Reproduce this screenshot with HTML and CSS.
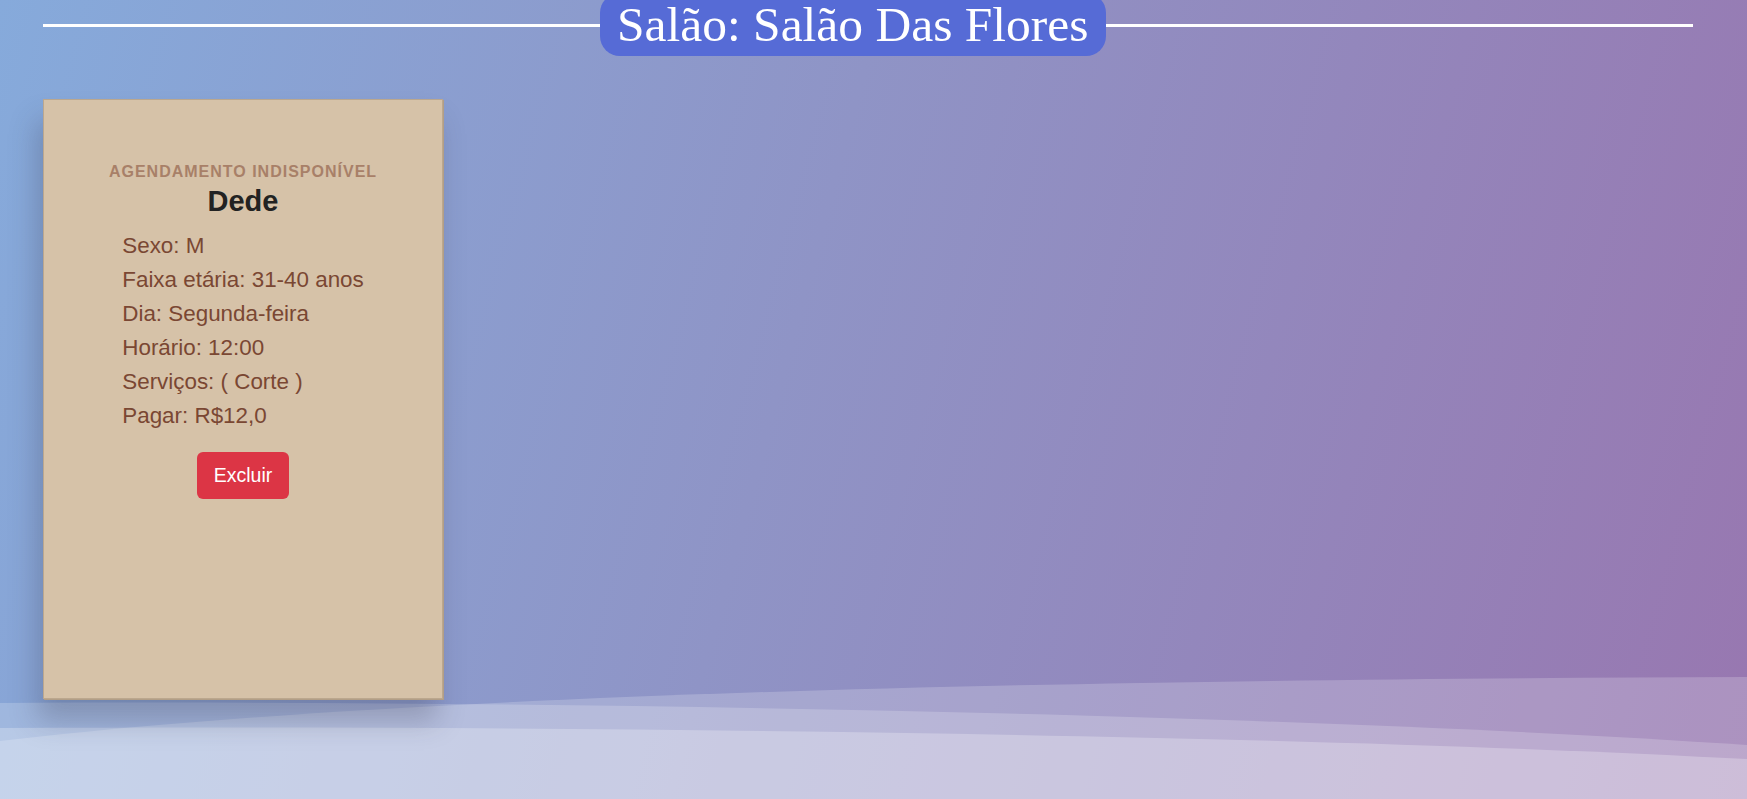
FILE: index.html
```html
<!DOCTYPE html>
<html lang="pt-BR">
<head>
<meta charset="utf-8">
<title>Salão Das Flores</title>
<link rel="stylesheet" href="styles.css">
</head>
<body>
<div class="page">
  <svg class="waves" viewBox="0 0 1747 799" preserveAspectRatio="none" aria-hidden="true">
    <path d="M0,741 C350,700 900,680 1747,677 L1747,799 L0,799 Z" fill="#ffffff" fill-opacity="0.2"/>
    <path d="M0,703 C600,700 1300,715 1747,745 L1747,799 L0,799 Z" fill="#ffffff" fill-opacity="0.2"/>
    <path d="M0,728 C600,725 1300,735 1747,759 L1747,799 L0,799 Z" fill="#ffffff" fill-opacity="0.25"/>
  </svg>
  <header class="title-bar">
    <span class="rule rule-left"></span>
    <h1 class="title">Salão: Salão Das Flores</h1>
    <span class="rule rule-right"></span>
  </header>
  <main class="cards">
    <article class="card">
      <p class="status">AGENDAMENTO INDISPONÍVEL</p>
      <h2 class="name">Dede</h2>
      <div class="details">
        <p>Sexo: M</p>
        <p>Faixa etária: 31-40 anos</p>
        <p>Dia: Segunda-feira</p>
        <p>Horário: 12:00</p>
        <p>Serviços: ( Corte )</p>
        <p>Pagar: R$12,0</p>
      </div>
      <button class="btn-delete" type="button">Excluir</button>
    </article>
  </main>
</div>
</body>
</html>
```

FILE: styles.css
```css
* { box-sizing: border-box; }

html, body {
  margin: 0;
  padding: 0;
}

body {
  font-family: "Liberation Sans", Arial, sans-serif;
}

.page {
  position: relative;
  min-height: 100vh;
  overflow: hidden;
  background: linear-gradient(105deg, #86aadb 0%, #8f94c6 45%, #9877b0 100%);
}

.waves {
  position: absolute;
  left: 0;
  top: 0;
  width: 100%;
  height: 100%;
  z-index: 0;
}

.title-bar {
  position: relative;
  z-index: 1;
  display: flex;
  align-items: flex-start;
  margin: -7px 54px 0 43px;
}

.rule {
  height: 3px;
  margin-top: 31px;
  background: #ffffff;
}

.rule-left { flex: 0 0 557px; }
.rule-right { flex: 1 1 auto; }

.title {
  margin: 0;
  padding: 10px 17px 10px;
  font-family: "Liberation Serif", "Times New Roman", serif;
  font-weight: normal;
  font-size: 49.5px;
  line-height: 43px;
  color: #ffffff;
  background: #566bd6;
  border-radius: 20px;
  white-space: nowrap;
}

.cards {
  position: relative;
  z-index: 1;
  display: flex;
  padding: 43px 0 0 43px;
}

.card {
  width: 400px;
  height: 600px;
  display: flex;
  flex-direction: column;
  align-items: center;
  padding-top: 63px;
  background: #d6c2a8;
  border: 1px solid #bba78e;
  box-shadow: 1px 1px 0 #b29e86, -6px 22px 26px rgba(50, 50, 70, 0.26);
}

.status {
  margin: 0;
  font-size: 16px;
  font-weight: bold;
  letter-spacing: 1px;
  color: #a88068;
}

.name {
  margin: 4px 0 0;
  font-size: 29px;
  font-weight: bold;
  color: #222222;
}

.details {
  display: flex;
  flex-direction: column;
  gap: 8px;
  margin-top: 15px;
}

.details p {
  margin: 0;
  font-size: 22.4px;
  color: #7a4733;
}

.btn-delete {
  margin-top: 23px;
  padding: 12px 17px;
  font-family: "Liberation Sans", Arial, sans-serif;
  font-size: 19.5px;
  line-height: normal;
  color: #ffffff;
  background: #dc3545;
  border: none;
  border-radius: 6px;
}
```
